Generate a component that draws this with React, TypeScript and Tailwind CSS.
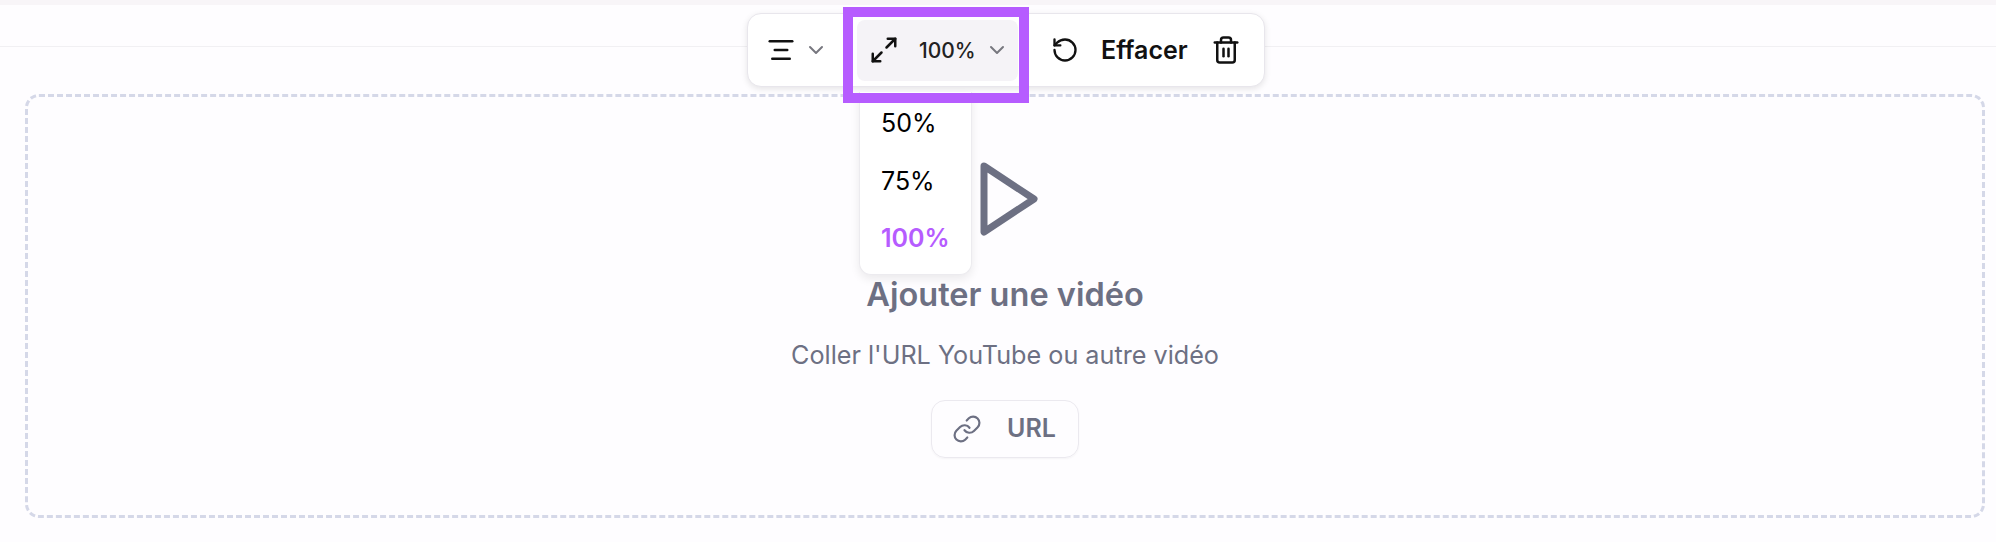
import { ChevronDown, Link, Maximize2, RotateCcw, Trash2, AlignCenter } from "lucide-react";

export default function App() {
  return (
    <div className="relative h-[542px] w-[1996px] overflow-hidden bg-[#fefdff] font-['Inter',sans-serif]">
      <div className="h-[5px] bg-[#f8f5f8]" />
      <div className="h-[42px] border-b border-[#f1f0f3]" />
      <div className="px-[25px] pt-[47px]">
        <div className="flex h-[424px] w-[1960px] flex-col items-center rounded-[14px] border-[3px] border-dashed border-[#d5d8e8] pt-[65px]">
          <svg width="58" height="74" viewBox="0 0 58 74" fill="none" stroke="#6d7083" strokeWidth="7" strokeLinejoin="round" className="ml-[7px]">
            <path d="M4 4 L54 37 L4 70 Z" />
          </svg>
          <div className="mt-[39px] text-[32.5px] font-semibold leading-[40px] text-[#6d7083]">Ajouter une vidéo</div>
          <div className="mt-[24px] text-[25.2px] leading-[32px] text-[#6d7083]">Coller l'URL YouTube ou autre vidéo</div>
          <div className="mt-[29px] flex h-[58px] w-[148px] items-center gap-[25px] rounded-[14px] border border-[#ebe9ef] pl-[20px] shadow-[0_1px_2px_rgba(0,0,0,0.04)]">
            <Link size={30} strokeWidth={1.75} className="text-[#6d7083]" />
            <span className="text-[25px] font-semibold text-[#6d7083]">URL</span>
          </div>
        </div>
      </div>

      <div className="absolute left-[747px] top-[13px] flex h-[74px] w-[518px] items-center rounded-[14px] border border-[#e8e6ec] bg-white shadow-[0_2px_6px_rgba(0,0,0,0.1)]">
        <AlignCenter size={30} strokeWidth={2} className="ml-[18px] text-[#111]" />
        <ChevronDown size={24} strokeWidth={2} className="ml-[8px] text-[#77777f]" />
        <div className="ml-[29px] flex h-[61px] w-[161px] items-center rounded-[8px] bg-[#f5f3f7] pl-[12px]">
          <Maximize2 size={30} strokeWidth={2} className="text-[#111]" />
          <span className="ml-[20px] pt-[2px] text-[21px] font-medium text-[#222]">100%</span>
          <ChevronDown size={24} strokeWidth={2} className="ml-[9px] text-[#77777f]" />
        </div>
        <RotateCcw size={28} strokeWidth={2} className="ml-[33px] text-[#111]" />
        <span className="ml-[22px] pt-[2px] text-[25px] font-semibold text-[#111]">Effacer</span>
        <Trash2 size={30} strokeWidth={2} className="ml-[23px] text-[#111]" />
      </div>

      <div className="absolute left-[859px] top-[92px] flex h-[183px] w-[113px] flex-col rounded-b-[12px] border border-t-0 border-[#ecebef] bg-white pl-[21px] pt-[15px] text-[25px] shadow-[0_4px_10px_rgba(0,0,0,0.08)]">
        <div className="h-[58px] leading-[32px] text-black">50%</div>
        <div className="h-[57px] leading-[32px] text-black">75%</div>
        <div className="font-semibold leading-[32px] text-[#b65cff]">100%</div>
      </div>

      <div className="absolute left-[843px] top-[7px] h-[96px] w-[186px] border-[10px] border-[#b65cff]" />
    </div>
  );
}
